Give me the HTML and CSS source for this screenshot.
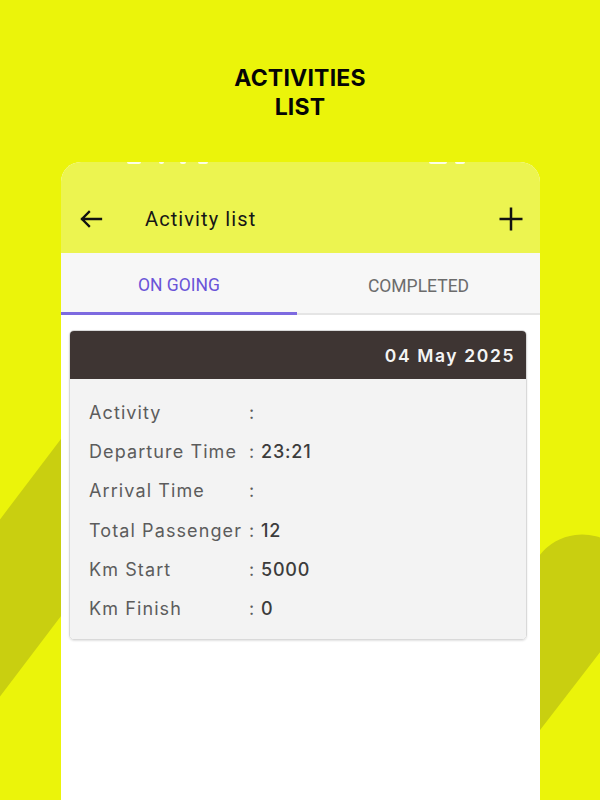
FILE: index.html
```html
<!DOCTYPE html>
<html lang="en">
<head>
<meta charset="utf-8">
<title>Activities list</title>
<link rel="stylesheet" href="styles.css">
</head>
<body>
<svg class="bg-stripes" width="600" height="800" viewBox="0 0 600 800" aria-hidden="true">
  <line x1="-150" y1="806" x2="150" y2="410" stroke="#c9cf10" stroke-width="107" stroke-linecap="round"/>
  <line x1="380" y1="850" x2="582" y2="588" stroke="#c9cf10" stroke-width="107" stroke-linecap="round"/>
</svg>
<main class="page">
  <h1 class="title">ACTIVITIES<br>LIST</h1>
  <section class="phone">
    <header class="appbar">
      <div class="status">
        <span class="s1"></span><span class="s2"></span><span class="s3"></span><span class="s4"></span>
        <span class="gap"></span>
        <span class="s5"></span><span class="s6"></span>
      </div>
      <div class="bar">
        <svg class="icon-back" width="24" height="18" viewBox="0 0 24 18" aria-hidden="true">
          <path d="M22 9H3M10 2L3 9l7 7" fill="none" stroke="#111" stroke-width="2.3" stroke-linecap="square"/>
        </svg>
        <span class="bar-title">Activity list</span>
        <svg class="icon-plus" width="26" height="26" viewBox="0 0 26 26" aria-hidden="true">
          <path d="M13 1.5v23M1.5 13h23" fill="none" stroke="#111" stroke-width="2.5"/>
        </svg>
      </div>
    </header>
    <nav class="tabs">
      <div class="tab active">ON GOING</div>
      <div class="tab">COMPLETED</div>
    </nav>
    <div class="content">
      <article class="card">
        <div class="card-head">04 May 2025</div>
        <div class="card-body">
          <div class="row"><span class="lbl">Activity</span><span class="sep">:</span><span class="val"></span></div>
          <div class="row"><span class="lbl">Departure Time</span><span class="sep">:</span><span class="val">23:21</span></div>
          <div class="row"><span class="lbl">Arrival Time</span><span class="sep">:</span><span class="val"></span></div>
          <div class="row"><span class="lbl">Total Passenger</span><span class="sep">:</span><span class="val">12</span></div>
          <div class="row"><span class="lbl">Km Start</span><span class="sep">:</span><span class="val">5000</span></div>
          <div class="row"><span class="lbl">Km Finish</span><span class="sep">:</span><span class="val">0</span></div>
        </div>
      </article>
    </div>
  </section>
</main>
</body>
</html>
```

FILE: styles.css
```css
html, body {
  margin: 0;
  padding: 0;
}
body {
  width: 600px;
  height: 800px;
  overflow: hidden;
  position: relative;
  background: #ebf40a;
  font-family: "Inter", "Roboto", "Liberation Sans", sans-serif;
}
.bg-stripes {
  position: absolute;
  left: 0;
  top: 0;
  z-index: 0;
}
.page {
  position: relative;
  z-index: 1;
  display: flex;
  flex-direction: column;
  align-items: center;
  padding-top: 64px;
}
.title {
  margin: 0;
  font-family: "Inter", "Roboto", sans-serif;
  font-weight: 700;
  font-size: 23px;
  line-height: 29px;
  text-align: center;
  color: #050505;
  letter-spacing: 0.2px;
}
.phone {
  margin-top: 40px;
  margin-left: 1px;
  width: 479px;
  height: 660px;
  background: #ffffff;
  border-radius: 20px 20px 0 0;
  overflow: hidden;
  display: flex;
  flex-direction: column;
}
.appbar {
  background: #ecf450;
  height: 91px;
  display: flex;
  flex-direction: column;
}
.status {
  display: flex;
  height: 3px;
  padding: 0 0 0 66px;
  gap: 8px;
  align-items: flex-start;
}
.status span {
  height: 2px;
  background: rgba(255,255,255,0.85);
  border-radius: 0 0 2px 2px;
}
.status .s1 { width: 14px; }
.status .s2 { width: 5px; margin-left: 10px; }
.status .s3 { width: 6px; margin-left: 8px; }
.status .s4 { width: 10px; margin-left: 4px; }
.status .gap { width: 205px; background: transparent; }
.status .s5 { width: 18px; }
.status .s6 { width: 10px; }
.bar {
  margin-top: 31px;
  height: 46px;
  display: flex;
  align-items: center;
  padding: 0 16px 0 18px;
}
.icon-back {
  flex: none;
}
.bar-title {
  margin-left: 42px;
  font-family: "Roboto", "Inter", sans-serif;
  font-size: 20px;
  letter-spacing: 1.1px;
  color: #161616;
  flex: 1;
}
.icon-plus {
  flex: none;
}
.tabs {
  display: flex;
  background: #f7f7f7;
  height: 62px;
}
.tab {
  flex: 1;
  display: flex;
  align-items: center;
  justify-content: center;
  padding-top: 6px;
  font-family: "Roboto", "Inter", sans-serif;
  font-size: 17.5px;
  color: #6c6c6c;
  border-bottom: 2px solid #e5e5e5;
  box-sizing: border-box;
}
.tab.active {
  color: #6a54d8;
  border-bottom: 3px solid #7d6ae0;
  padding-top: 5px;
}
.tab:first-child {
  flex: 0 0 236px;
}
.content {
  flex: 1;
  background: #ffffff;
  padding: 15px 13px 0 8px;
}
.card {
  border-radius: 5px;
  overflow: hidden;
  border: 1px solid #d9d9d9;
  box-shadow: 0 1px 2px rgba(0,0,0,0.12);
}
.card-head {
  background: #3e3533;
  height: 48px;
  display: flex;
  align-items: center;
  justify-content: flex-end;
  padding-right: 11px;
  color: #f4f4f4;
  font-size: 17.5px;
  font-weight: 600;
  letter-spacing: 1.6px;
}
.card-body {
  background: #f3f3f3;
  padding: 14px 0 11px 19px;
  display: flex;
  flex-direction: column;
}
.row {
  height: 39.2px;
  display: grid;
  grid-template-columns: 160px 12px auto;
  align-items: center;
  font-size: 18px;
  letter-spacing: 1.1px;
}
.lbl {
  color: #5c5c5c;
  white-space: nowrap;
}
.sep {
  color: #5c5c5c;
}
.val {
  color: #3c3c3c;
  font-weight: 500;
  letter-spacing: 0.8px;
}
```
